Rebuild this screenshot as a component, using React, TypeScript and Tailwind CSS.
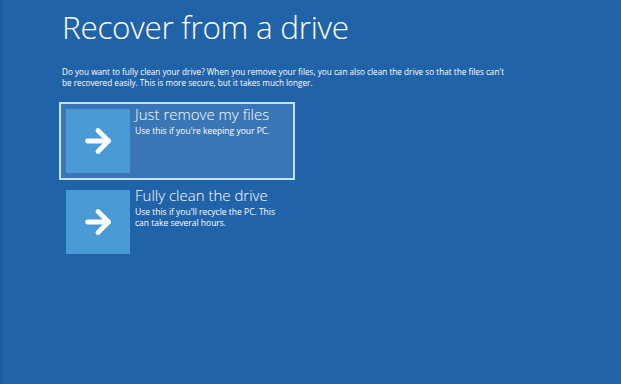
import { ArrowRight } from 'lucide-react';

function Option({
  title,
  lines,
  selected,
}: {
  title: string;
  lines: string[];
  selected?: boolean;
}) {
  return (
    <div
      className={
        'flex items-start gap-[5px] w-[236px] h-[78px] p-[5px] ' +
        (selected ? 'border-2 border-[#c4e2f4] bg-[#3a76b6]' : 'border-2 border-transparent')
      }
    >
      <div className="w-[64px] h-[64px] shrink-0 bg-[#4a9ad6] flex items-center justify-center">
        <ArrowRight className="w-[36px] h-[36px] text-white" strokeWidth={3.2} />
      </div>
      <div className="flex flex-col -mt-[4px]">
        <div className="text-[15px] font-light leading-[18px] text-white">{title}</div>
        <div className="mt-[2px] text-[8.5px] leading-[11px] text-white">
          {lines.map((l) => (
            <div key={l}>{l}</div>
          ))}
        </div>
      </div>
    </div>
  );
}

export default function App() {
  return (
    <div
      className="w-[621px] h-[384px] bg-[#2163a9] overflow-hidden flex"
      style={{ fontFamily: '"Open Sans", "Noto Sans", sans-serif' }}
    >
      <div className="w-[3px] h-full bg-[#1d5c9f]" />
      <div className="flex flex-col pl-[59px] pt-[7px]">
        <h1 className="text-[31.5px] font-light leading-[40px] text-white tracking-[-0.3px]">
          Recover from a drive
        </h1>
        <p className="mt-[19px] text-[8.2px] leading-[11px] text-white">
          Do you want to fully clean your drive? When you remove your files, you can also clean the drive so that the files can't
          <br />
          be recovered easily. This is more secure, but it takes much longer.
        </p>
        <div className="flex flex-col mt-[14px] -ml-[3px] gap-[3px]">
          <Option title="Just remove my files" lines={["Use this if you're keeping your PC."]} selected />
          <Option
            title="Fully clean the drive"
            lines={["Use this if you'll recycle the PC. This", 'can take several hours.']}
          />
        </div>
      </div>
    </div>
  );
}
